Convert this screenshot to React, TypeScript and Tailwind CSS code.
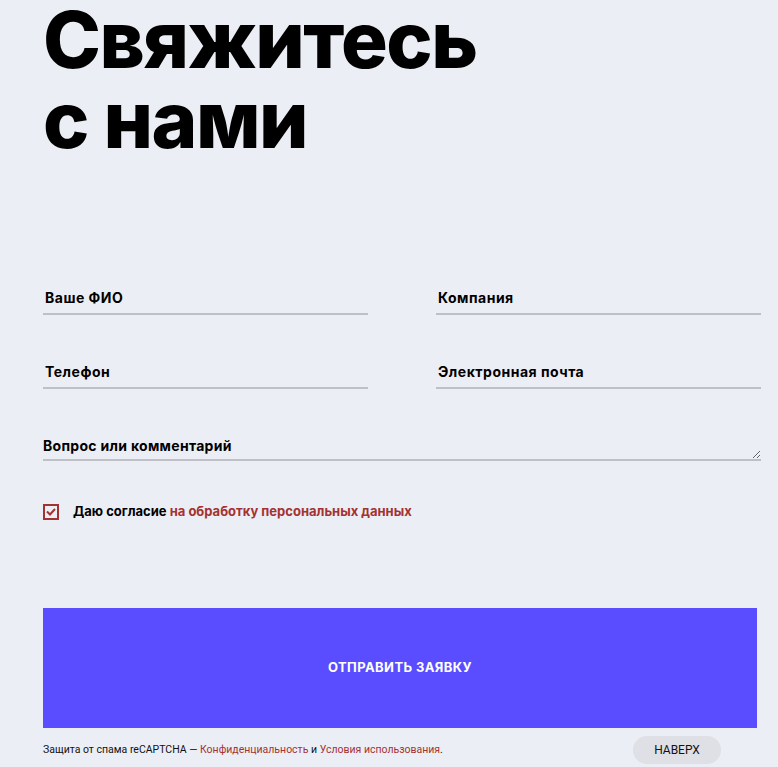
import React, { useState } from "react";

const sans = { fontFamily: 'Inter, "Noto Sans", sans-serif' };

function Field({ label }: { label: string }) {
  return (
    <label className="flex flex-col w-full">
      <input
        placeholder={label}
        className="h-[34px] border-b-2 border-[#bfc0c5] bg-transparent px-[2px] text-[14px] font-bold tracking-[0.5px] text-black placeholder:text-black outline-none"
      />
    </label>
  );
}

export default function App() {
  const [agree, setAgree] = useState(true);

  return (
    <div className="min-h-[767px] w-full bg-[#eceef5] pl-[43px] pr-[17px]" style={sans}>
      <h1 className="text-[78px] font-extrabold leading-[80px] tracking-[-1.5px] text-black">
        Свяжитесь
        <br />с нами
      </h1>

      <form className="mt-[121px]" onSubmit={(e) => e.preventDefault()}>
        <div className="grid grid-cols-2 gap-x-[68px] gap-y-[40px]">
          <Field label="Ваше ФИО" />
          <Field label="Компания" />
          <Field label="Телефон" />
          <Field label="Электронная почта" />
        </div>

        <textarea
          placeholder="Вопрос или комментарий"
          rows={1}
          className="mt-[38px] block h-[34px] w-full resize-y border-b-2 border-[#bfc0c5] bg-transparent pt-[8px] text-[14px] font-bold tracking-[0.3px] text-black placeholder:text-black outline-none"
        />

        <div className="mt-[41px] flex items-center gap-[14px]">
          <button
            type="button"
            onClick={() => setAgree(!agree)}
            className="flex h-[16px] w-[16px] items-center justify-center border-2 border-[#a33232]"
          >
            {agree && (
              <svg width="10" height="8" viewBox="0 0 10 8" fill="none">
                <path d="M1 3.5 L4 6.5 L9 1" stroke="#a33232" strokeWidth="2" />
              </svg>
            )}
          </button>
          <span className="text-[13px] font-bold text-black">
            Даю согласие <span className="text-[#a33232]">на обработку персональных данных</span>
          </span>
        </div>

        <button
          type="submit"
          className="mt-[86px] flex h-[120px] w-[714px] items-center justify-center bg-[#594dff] text-[13px] font-bold tracking-[0.4px] text-white"
        >
          ОТПРАВИТЬ ЗАЯВКУ
        </button>
      </form>

      <div className="mt-[8px] flex items-center justify-between pr-[40px]" style={{ fontFamily: "Roboto, sans-serif" }}>
        <p className="text-[10.5px] text-[#111]">
          Защита от спама reCAPTCHA — <span className="text-[#a33232]">Конфиденциальность</span> и{" "}
          <span className="text-[#a33232]">Условия использования</span>.
        </p>
        <button className="h-[28px] w-[88px] rounded-full bg-[#dfe0e6] text-[12px] text-[#111]">НАВЕРХ</button>
      </div>
    </div>
  );
}
